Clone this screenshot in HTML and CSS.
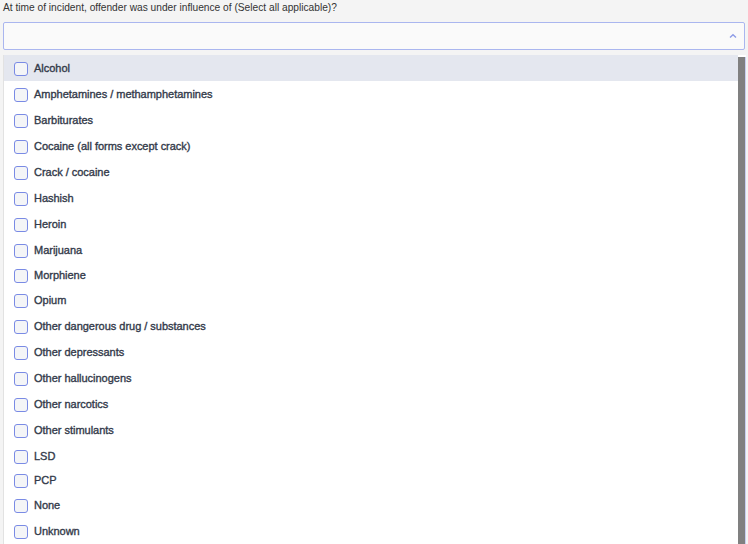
FILE: index.html
```html
<!DOCTYPE html>
<html>
<head>
<meta charset="utf-8">
<link rel="stylesheet" href="styles.css">
</head>
<body>
<div class="field">
  <div class="label">At time of incident, offender was under influence of (Select all applicable)?</div>
  <div class="select">
    <svg class="caret" width="10" height="6" viewBox="0 0 10 6"><path d="M2 4.5 L5 1.8 L8 4.5" fill="none" stroke="#8d9be6" stroke-width="1.4"/></svg>
  </div>
  <div class="panel">
    <ul class="list">
      <li class="item active"><span class="box"></span><span class="txt">Alcohol</span></li>
      <li class="item"><span class="box"></span><span class="txt">Amphetamines / methamphetamines</span></li>
      <li class="item"><span class="box"></span><span class="txt">Barbiturates</span></li>
      <li class="item"><span class="box"></span><span class="txt">Cocaine (all forms except crack)</span></li>
      <li class="item"><span class="box"></span><span class="txt">Crack / cocaine</span></li>
      <li class="item"><span class="box"></span><span class="txt">Hashish</span></li>
      <li class="item"><span class="box"></span><span class="txt">Heroin</span></li>
      <li class="item"><span class="box"></span><span class="txt">Marijuana</span></li>
      <li class="item short"><span class="box"></span><span class="txt">Morphiene</span></li>
      <li class="item"><span class="box"></span><span class="txt">Opium</span></li>
      <li class="item"><span class="box"></span><span class="txt">Other dangerous drug / substances</span></li>
      <li class="item"><span class="box"></span><span class="txt">Other depressants</span></li>
      <li class="item"><span class="box"></span><span class="txt">Other hallucinogens</span></li>
      <li class="item"><span class="box"></span><span class="txt">Other narcotics</span></li>
      <li class="item"><span class="box"></span><span class="txt">Other stimulants</span></li>
      <li class="item mid"><span class="box"></span><span class="txt">LSD</span></li>
      <li class="item short"><span class="box"></span><span class="txt">PCP</span></li>
      <li class="item"><span class="box"></span><span class="txt">None</span></li>
      <li class="item"><span class="box"></span><span class="txt">Unknown</span></li>
    </ul>
    <div class="scrollbar"></div>
  </div>
</div>
</body>
</html>
```
FILE: styles.css
```css
html, body {
  margin: 0;
  padding: 0;
  background: #f4f4f4;
  height: 544px;
  overflow: hidden;
}
.field {
  font-family: "Liberation Sans", Arial, sans-serif;
  color: #333a4a;
}
.label {
  font-size: 10.2px;
  line-height: 16px;
  padding-left: 3px;
  color: #333;
}
.select {
  margin: 6px 3px 0 3px;
  height: 26px;
  border: 1px solid #aab6ef;
  border-radius: 2px;
  background: #fafafa;
  display: flex;
  align-items: center;
  justify-content: flex-end;
  padding-right: 6px;
}
.caret {
  display: block;
}
.panel {
  margin: 5px 2px 0 3px;
  display: flex;
  background: #fff;
  border-left: 1px solid #e2e2e2;
}
.list {
  list-style: none;
  margin: 0;
  padding: 0;
  flex: 1;
}
.item {
  height: 26px;
  display: flex;
  align-items: center;
  padding-left: 10px;
  font-size: 11px;
  font-weight: normal;
  letter-spacing: -0.02px;
  -webkit-text-stroke: 0.35px #333a4a;
}
.item.short {
  height: 24px;
}
.item.mid {
  height: 25px;
}
.item.active {
  background: #e4e7ef;
}
.box {
  box-sizing: border-box;
  width: 14px;
  height: 14px;
  border: 1.5px solid #7a8be5;
  border-radius: 3px;
  background: #f4f5f7;
  margin-right: 6px;
  margin-top: 2px;
  flex: none;
  -webkit-text-stroke: 0;
}
.scrollbar {
  width: 7px;
  margin-top: 2px;
  background: #808080;
  border-right: 1px solid #c8cff0;
}
```
